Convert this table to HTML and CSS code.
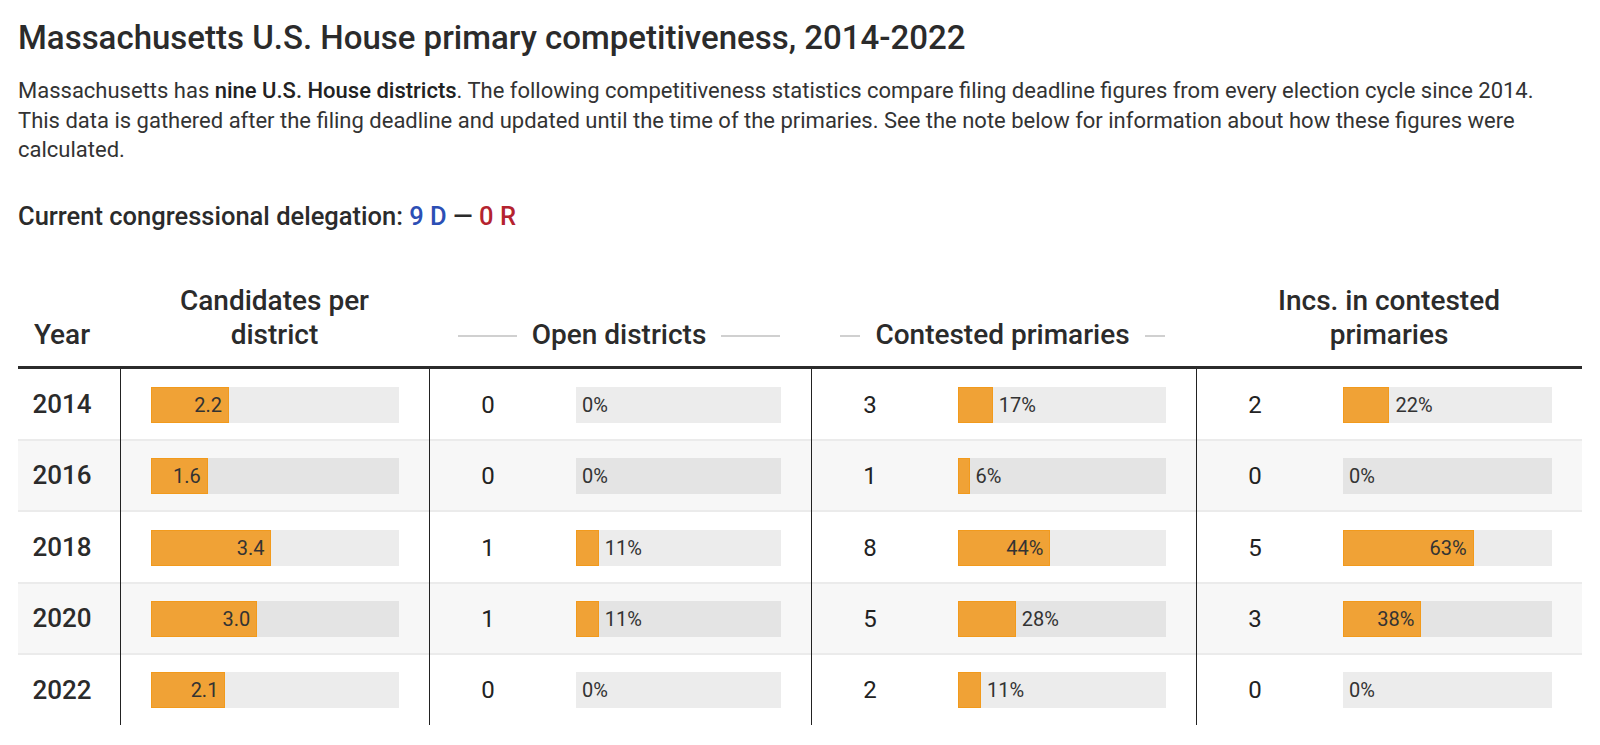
FILE: index.html
```html
<!DOCTYPE html>
<html lang="en">
<head>
<meta charset="utf-8">
<title>Massachusetts U.S. House primary competitiveness, 2014-2022</title>
<link rel="stylesheet" href="styles.css">
</head>
<body>
<div class="page">
  <h1 class="title">Massachusetts U.S. House primary competitiveness, 2014-2022</h1>
  <p class="intro">Massachusetts has <strong>nine U.S. House districts</strong>. The following competitiveness statistics compare filing deadline figures from every election cycle since 2014. This data is gathered after the filing deadline and updated until the time of the primaries. See the note below for information about how these figures were calculated.</p>
  <p class="delegation">Current congressional delegation: <span class="dem">9 D</span> — <span class="rep">0 R</span></p>

  <div class="table">
    <div class="thead">
      <div class="th th-year">Year</div>
      <div class="th th-center">Candidates per<br>district</div>
      <div class="th th-group"><span class="hrule"></span><span class="glabel">Open districts</span><span class="hrule"></span></div>
      <div class="th th-group"><span class="hrule"></span><span class="glabel">Contested primaries</span><span class="hrule"></span></div>
      <div class="th th-center">Incs. in contested<br>primaries</div>
    </div>

    <div class="row">
      <div class="c-year">2014</div>
      <div class="c-cand"><div class="bar"><div class="fill" style="width:31.43%"><span class="lbl">2.2</span></div></div></div>
      <div class="c-metric"><span class="num">0</span><div class="bar"><div class="fill" style="width:0%"></div><span class="lbl">0%</span></div></div>
      <div class="c-metric"><span class="num">3</span><div class="bar"><div class="fill" style="width:16.67%"></div><span class="lbl">17%</span></div></div>
      <div class="c-metric"><span class="num">2</span><div class="bar"><div class="fill" style="width:22.22%"></div><span class="lbl">22%</span></div></div>
    </div>

    <div class="row alt">
      <div class="c-year">2016</div>
      <div class="c-cand"><div class="bar"><div class="fill" style="width:22.86%"><span class="lbl">1.6</span></div></div></div>
      <div class="c-metric"><span class="num">0</span><div class="bar"><div class="fill" style="width:0%"></div><span class="lbl">0%</span></div></div>
      <div class="c-metric"><span class="num">1</span><div class="bar"><div class="fill" style="width:5.56%"></div><span class="lbl">6%</span></div></div>
      <div class="c-metric"><span class="num">0</span><div class="bar"><div class="fill" style="width:0%"></div><span class="lbl">0%</span></div></div>
    </div>

    <div class="row">
      <div class="c-year">2018</div>
      <div class="c-cand"><div class="bar"><div class="fill" style="width:48.57%"><span class="lbl">3.4</span></div></div></div>
      <div class="c-metric"><span class="num">1</span><div class="bar"><div class="fill" style="width:11.11%"></div><span class="lbl">11%</span></div></div>
      <div class="c-metric"><span class="num">8</span><div class="bar"><div class="fill" style="width:44.44%"><span class="lbl">44%</span></div></div></div>
      <div class="c-metric"><span class="num">5</span><div class="bar"><div class="fill" style="width:62.5%"><span class="lbl">63%</span></div></div></div>
    </div>

    <div class="row alt">
      <div class="c-year">2020</div>
      <div class="c-cand"><div class="bar"><div class="fill" style="width:42.86%"><span class="lbl">3.0</span></div></div></div>
      <div class="c-metric"><span class="num">1</span><div class="bar"><div class="fill" style="width:11.11%"></div><span class="lbl">11%</span></div></div>
      <div class="c-metric"><span class="num">5</span><div class="bar"><div class="fill" style="width:27.78%"></div><span class="lbl">28%</span></div></div>
      <div class="c-metric"><span class="num">3</span><div class="bar"><div class="fill" style="width:37.5%"><span class="lbl">38%</span></div></div></div>
    </div>

    <div class="row last">
      <div class="c-year">2022</div>
      <div class="c-cand"><div class="bar"><div class="fill" style="width:30%"><span class="lbl">2.1</span></div></div></div>
      <div class="c-metric"><span class="num">0</span><div class="bar"><div class="fill" style="width:0%"></div><span class="lbl">0%</span></div></div>
      <div class="c-metric"><span class="num">2</span><div class="bar"><div class="fill" style="width:11.11%"></div><span class="lbl">11%</span></div></div>
      <div class="c-metric"><span class="num">0</span><div class="bar"><div class="fill" style="width:0%"></div><span class="lbl">0%</span></div></div>
    </div>
  </div>
</div>
</body>
</html>
```

FILE: styles.css
```css
* { box-sizing: border-box; }

html, body {
  margin: 0;
  padding: 0;
  background: #ffffff;
}

body {
  font-family: Roboto, "Liberation Sans", Arial, sans-serif;
  color: #333333;
}

.page {
  padding: 18px 18px 0 18px;
}

.title {
  margin: 0;
  font-size: 33px;
  line-height: 40px;
  font-weight: 500;
  color: #2b2b2b;
}

.intro {
  margin: 18px 0 0 0;
  max-width: 1555px;
  font-size: 22px;
  line-height: 29.5px;
  font-weight: 400;
  color: #333333;
}

.intro strong {
  font-weight: 500;
  color: #222222;
}

.delegation {
  margin: 35px 0 0 0;
  font-size: 25.5px;
  line-height: 32px;
  font-weight: 500;
  color: #2b2b2b;
}

.dem { color: #2c4fb5; }
.rep { color: #b4232f; }

.table {
  margin-top: 52px;
  width: 1564px;
}

.thead,
.row {
  display: grid;
  grid-template-columns: 102px 309px 382px 385px 386px;
}

.thead {
  border-bottom: 3px solid #2b2b2b;
  align-items: end;
}

.th {
  font-size: 28px;
  line-height: 34px;
  font-weight: 500;
  color: #2b2b2b;
  padding-bottom: 14.5px;
}

.th-year {
  text-align: center;
  padding-right: 14px;
}

.th-center {
  text-align: center;
}

.th-group {
  display: flex;
  align-items: center;
  gap: 15px;
  padding-left: 29px;
  padding-right: 31px;
}

.hrule {
  flex: 1;
  height: 2px;
  background: #d0d0d0;
  margin-top: 2px;
}

.glabel {
  white-space: nowrap;
}

.row {
  height: 71.5px;
  border-bottom: 2px solid #ebebeb;
}

.row.alt {
  background: #f7f7f7;
}

.row.last {
  border-bottom: none;
  height: 70px;
}

.c-year {
  display: flex;
  align-items: center;
  justify-content: center;
  padding-right: 14px;
  font-size: 26px;
  font-weight: 500;
  color: #2b2b2b;
}

.c-cand {
  display: flex;
  align-items: center;
  border-left: 1px solid #222222;
  padding: 0 30px 0 30px;
}

.c-metric {
  display: flex;
  align-items: center;
  border-left: 1px solid #222222;
  padding-right: 30px;
}

.row:not(.last) .c-cand,
.row:not(.last) .c-metric {
  margin-bottom: -2px;
}

.num {
  width: 116px;
  text-align: center;
  font-size: 24px;
  font-weight: 400;
  color: #222222;
}

.c-metric .bar {
  margin-left: 30px;
}

.bar {
  flex: 1;
  height: 36px;
  background: rgba(0, 0, 0, 0.075);
  display: flex;
  align-items: center;
}

.fill {
  height: 100%;
  background: #f0a236;
  box-shadow: inset 0 0 0 1px #f29a1c;
  display: flex;
  align-items: center;
  justify-content: flex-end;
  flex-shrink: 0;
}

.lbl {
  font-size: 20px;
  font-weight: 400;
  color: #333333;
  white-space: nowrap;
}

.fill .lbl {
  padding-right: 7px;
}

.bar > .lbl {
  margin-left: 6px;
}
```
